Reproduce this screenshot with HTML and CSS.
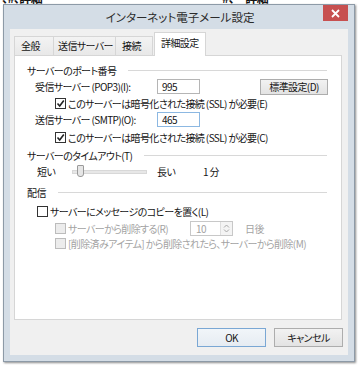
FILE: index.html
```html
<!DOCTYPE html>
<html>
<head>
    <title>インターネット電子メール設定</title>
    <link rel="stylesheet" href="styles.css">
</head>
<body>
    <div class="bgtext">
        <span class="bg-left">、#、詳細</span>
        <span class="bg-right">#、‥詳細</span>
    </div>

    <div class="window">
        <div class="titlebar">
            <span class="title">インターネット電子メール設定</span>
            <div class="close">
                <svg width="9" height="9" viewBox="0 0 9 9"><path d="M1 1L8 8M8 1L1 8" stroke="#fff" stroke-width="1.8"/></svg>
            </div>
        </div>

        <div class="client">
            <div class="tabs">
                <div class="tab tab-general">全般</div>
                <div class="tab tab-send">送信サーバー</div>
                <div class="tab tab-conn">接続</div>
                <div class="tab tab-active">詳細設定</div>
            </div>

            <div class="panel">
                <div class="group r-head1"><span>サーバーのポート番号</span></div>

                <div class="row r-pop">
                    <span class="port-label">受信サーバー (POP3)(I):</span>
                    <div class="field">995</div>
                    <div class="btn btn-default-set">標準設定(D)</div>
                </div>

                <div class="row r-chk1 indent2">
                    <span class="box checked">
                        <svg width="9" height="9" viewBox="0 0 9 9"><path d="M1.5 4.5L3.7 7L7.8 1.5" stroke="#222" stroke-width="1.6" fill="none"/></svg>
                    </span>
                    <span>このサーバーは暗号化された接続 (SSL) が必要(E)</span>
                </div>

                <div class="row r-smtp">
                    <span class="port-label">送信サーバー (SMTP)(O):</span>
                    <div class="field focus">465</div>
                </div>

                <div class="row r-chk2 indent2">
                    <span class="box checked">
                        <svg width="9" height="9" viewBox="0 0 9 9"><path d="M1.5 4.5L3.7 7L7.8 1.5" stroke="#222" stroke-width="1.6" fill="none"/></svg>
                    </span>
                    <span>このサーバーは暗号化された接続 (SSL) が必要(C)</span>
                </div>

                <div class="group r-head2"><span>サーバーのタイムアウト(T)</span></div>

                <div class="row r-timeout">
                    <span class="short">短い</span>
                    <div class="slider">
                        <div class="track"></div>
                        <div class="thumb"></div>
                    </div>
                    <span class="long">長い</span>
                    <span class="minutes">1 分</span>
                </div>

                <div class="group r-head3"><span>配信</span></div>

                <div class="row r-chk3 indent1">
                    <span class="box"></span>
                    <span>サーバーにメッセージのコピーを置く(L)</span>
                </div>

                <div class="row r-chk4 indent2 disabled">
                    <div class="chk-wide">
                        <span class="box off"></span>
                        <span>サーバーから削除する(R)</span>
                    </div>
                    <div class="spinner">
                        <span>10</span>
                        <div class="spin-btn">
                            <svg width="7" height="9" viewBox="0 0 7 9"><path d="M1 3.5L3.5 1L6 3.5M1 5.5L3.5 8L6 5.5" stroke="#a8a8a8" stroke-width="1" fill="none"/></svg>
                        </div>
                    </div>
                    <span class="days">日後</span>
                </div>

                <div class="row r-chk5 indent2 disabled">
                    <span class="box off"></span>
                    <span>[削除済みアイテム] から削除されたら、サーバーから削除(M)</span>
                </div>
            </div>

            <div class="buttons">
                <div class="btn btn-ok">OK</div>
                <div class="btn btn-cancel">キャンセル</div>
            </div>
        </div>
    </div>
</body>
</html>
```

FILE: styles.css
```css
body {
    margin: 0;
    width: 358px;
    height: 366px;
    overflow: hidden;
    background-color: #fff;
    font-family: "Noto Sans CJK JP", "Noto Sans", sans-serif;
    font-feature-settings: "palt";
    font-size: 10px;
    letter-spacing: -0.6px;
    color: #141414;
    white-space: nowrap;
}

.bgtext {
    height: 4px;
    overflow: hidden;
    display: flex;
    font-size: 12px;
    font-weight: bold;
    line-height: 12px;
}

.bgtext span {
    margin-top: -8px;
}

.bg-left {
    margin-left: 2px;
}

.bg-right {
    margin-left: 180px;
}

.window {
    margin-left: 3px;
    width: 352px;
    height: 358px;
    box-sizing: border-box;
    border: 1px solid #8d9aa7;
    background-color: #d4dde6;
    padding: 0 6px 6px 6px;
    display: flex;
    flex-direction: column;
    box-shadow: 1px 1px 2px rgba(0, 0, 0, 0.45);
}

.titlebar {
    height: 24px;
    position: relative;
    display: flex;
    justify-content: center;
    align-items: center;
}

.title {
    font-size: 11.5px;
    letter-spacing: 0;
    color: #2b2b2b;
    margin-left: 2px;
}

.close {
    position: absolute;
    top: 0;
    right: 0;
    width: 25px;
    height: 16px;
    background-color: #c75050;
    display: flex;
    justify-content: center;
    align-items: center;
}

.client {
    flex: 1;
    background-color: #f0f0f0;
    padding: 3px 6px 0 4px;
    display: flex;
    flex-direction: column;
}

.tabs {
    display: flex;
    align-items: flex-end;
    height: 23px;
    position: relative;
    z-index: 1;
}

.tab {
    box-sizing: border-box;
    height: 19px;
    line-height: 18px;
    padding-left: 6px;
    border: 1px solid #d6d6d6;
    border-bottom: none;
    background: linear-gradient(#f3f3f3, #e8e8e8);
    margin-right: -1px;
}

.tab-general {
    width: 40px;
}

.tab-send {
    width: 63px;
    padding-left: 4px;
}

.tab-conn {
    width: 38px;
}

.tab-active {
    width: 52px;
    height: 24px;
    line-height: 20px;
    margin-left: 2px;
    margin-bottom: -1px;
    background: #fff;
}

.panel {
    height: 265px;
    box-sizing: border-box;
    border: 1px solid #d6d6d6;
    background-color: #fff;
    padding: 0 14px 0 12px;
}

.group {
    height: 15px;
    display: flex;
    align-items: center;
}

.group::after {
    content: "";
    flex: 1;
    height: 1px;
    background-color: #d8d8d8;
    margin-left: 12px;
}

.row {
    height: 15px;
    display: flex;
    align-items: center;
}

.r-head1 { margin-top: 7px; }
.r-pop { margin-top: 1px; padding-left: 8px; }
.r-chk1 { margin-top: 2px; }
.r-smtp { margin-top: 1px; padding-left: 8px; }
.r-chk2 { margin-top: 3px; }
.r-head2 { margin-top: 3px; }
.r-timeout { margin-top: 1px; padding-left: 10px; }
.r-head3 { margin-top: 6px; }
.r-chk3 { margin-top: 4px; }
.r-chk4 { margin-top: 2px; }
.r-chk5 { margin-top: 0; }

.indent1 {
    padding-left: 10px;
}

.indent2 {
    padding-left: 28px;
}

.port-label {
    width: 122px;
}

.field {
    box-sizing: border-box;
    width: 43px;
    height: 15px;
    line-height: 13px;
    padding-left: 4px;
    border: 1px solid #b5b5b5;
    background-color: #fff;
}

.field.focus {
    border-color: #8cb8e2;
}

.btn {
    box-sizing: border-box;
    height: 16px;
    border: 1px solid #adadad;
    background: linear-gradient(#f2f2f2, #e3e3e3);
    display: flex;
    justify-content: center;
    align-items: center;
}

.btn-default-set {
    width: 68px;
    margin-left: auto;
    margin-right: -1px;
}

.box {
    box-sizing: border-box;
    flex-shrink: 0;
    width: 11px;
    height: 11px;
    border: 1px solid #333;
    background-color: #fff;
    margin-right: 2px;
    display: flex;
    justify-content: center;
    align-items: center;
}

.box.off {
    border-color: #bcbcbc;
    background-color: #ececec;
}

.disabled {
    color: #a3a3a3;
}

.short {
    width: 20px;
}

.slider {
    position: relative;
    width: 75px;
    height: 15px;
    margin-left: 15px;
}

.track {
    margin-top: 6px;
    height: 2px;
    border: 1px solid #d8d8d8;
    background-color: #e7e7e7;
}

.thumb {
    position: absolute;
    left: 5px;
    top: 1px;
    width: 5px;
    height: 10px;
    border: 1px solid #9a9a9a;
    border-radius: 1px 1px 3px 3px;
    background-color: #e6e6e6;
}

.long {
    width: 18px;
    margin-left: 10px;
}

.minutes {
    margin-left: 28px;
}

.chk-wide {
    width: 135px;
    display: flex;
    align-items: center;
}

.spinner {
    box-sizing: border-box;
    width: 43px;
    height: 15px;
    border: 1px solid #c8c8c8;
    display: flex;
    align-items: center;
    padding-left: 5px;
}

.spinner span {
    flex: 1;
}

.spin-btn {
    width: 11px;
    height: 13px;
    border-left: 1px solid #dedede;
    background-color: #f4f4f4;
    display: flex;
    justify-content: center;
    align-items: center;
}

.days {
    margin-left: 12px;
}

.buttons {
    margin-top: 8px;
    display: flex;
    justify-content: flex-end;
    gap: 8px;
}

.btn-ok,
.btn-cancel {
    width: 69px;
    height: 19px;
}

.btn-ok {
    border-color: #7aa7d4;
    background: linear-gradient(#f1f5f9, #e6ecf2);
}

.btn-cancel {
    margin-right: -1px;
}
```
